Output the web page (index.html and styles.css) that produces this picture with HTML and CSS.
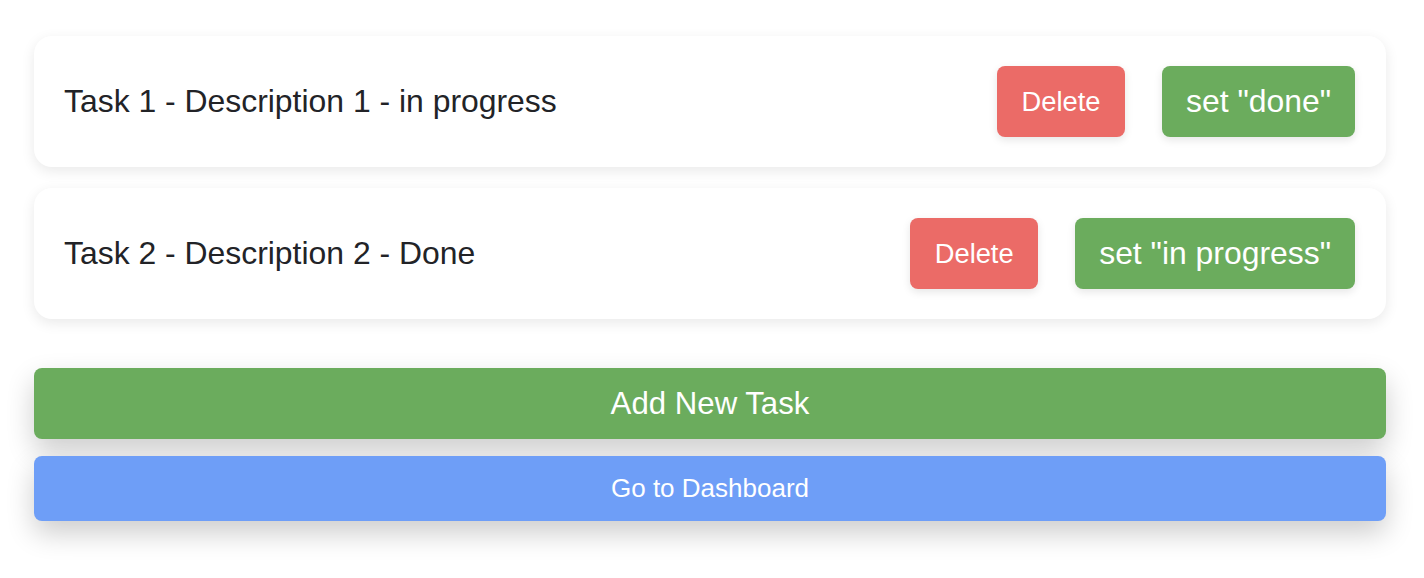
FILE: index.html
```html
<!DOCTYPE html>
<html>
<head>
<meta charset="utf-8">
<link rel="stylesheet" href="styles.css">
</head>
<body>
<div class="page">
  <div class="list">
    <div class="card">
      <span class="task-text">Task 1 - Description 1 - in progress</span>
      <div class="actions">
        <button class="btn btn-delete">Delete</button>
        <button class="btn btn-status">set "done"</button>
      </div>
    </div>
    <div class="card">
      <span class="task-text">Task 2 - Description 2 - Done</span>
      <div class="actions">
        <button class="btn btn-delete">Delete</button>
        <button class="btn btn-status">set "in progress"</button>
      </div>
    </div>
  </div>
  <div class="footer">
    <button class="wide wide-add">Add New Task</button>
    <button class="wide wide-dash">Go to Dashboard</button>
  </div>
</div>
</body>
</html>
```
FILE: styles.css
```css
html, body {
  margin: 0;
  padding: 0;
  background: #ffffff;
  font-family: "Liberation Sans", Arial, Helvetica, sans-serif;
}
.page {
  padding: 36px 38px 57px 34px;
  display: flex;
  flex-direction: column;
  gap: 49px;
}
.list {
  display: flex;
  flex-direction: column;
  gap: 21px;
}
.card {
  height: 131px;
  box-sizing: border-box;
  background: #fff;
  border-radius: 18px;
  box-shadow: 0 4px 14px rgba(0, 0, 0, 0.09);
  display: flex;
  align-items: center;
  justify-content: space-between;
  padding: 0 31px 0 30px;
}
.task-text {
  font-size: 31.9px;
  color: #222327;
}
.actions {
  display: flex;
  gap: 37px;
  align-items: center;
}
.btn {
  height: 71px;
  border: none;
  border-radius: 8px;
  color: #fff;
  font-family: "Liberation Sans", Arial, Helvetica, sans-serif;
  box-shadow: 0 3px 8px rgba(0, 0, 0, 0.1);
  padding: 0;
  cursor: pointer;
}
.btn-delete {
  background: #eb6b67;
  width: 128px;
  font-size: 27.3px;
}
.btn-status {
  background: #6bac5d;
  padding: 0 24px;
  font-size: 31.9px;
}
.footer {
  display: flex;
  flex-direction: column;
  gap: 17px;
}
.wide {
  width: 100%;
  border: none;
  border-radius: 8px;
  color: #fff;
  font-family: "Liberation Sans", Arial, Helvetica, sans-serif;
  box-shadow: 0 12px 28px rgba(0, 0, 0, 0.2);
  cursor: pointer;
}
.wide-add {
  height: 71px;
  background: #6bac5d;
  font-size: 31.2px;
}
.wide-dash {
  height: 65px;
  background: #6e9ef7;
  font-size: 26px;
}
```
